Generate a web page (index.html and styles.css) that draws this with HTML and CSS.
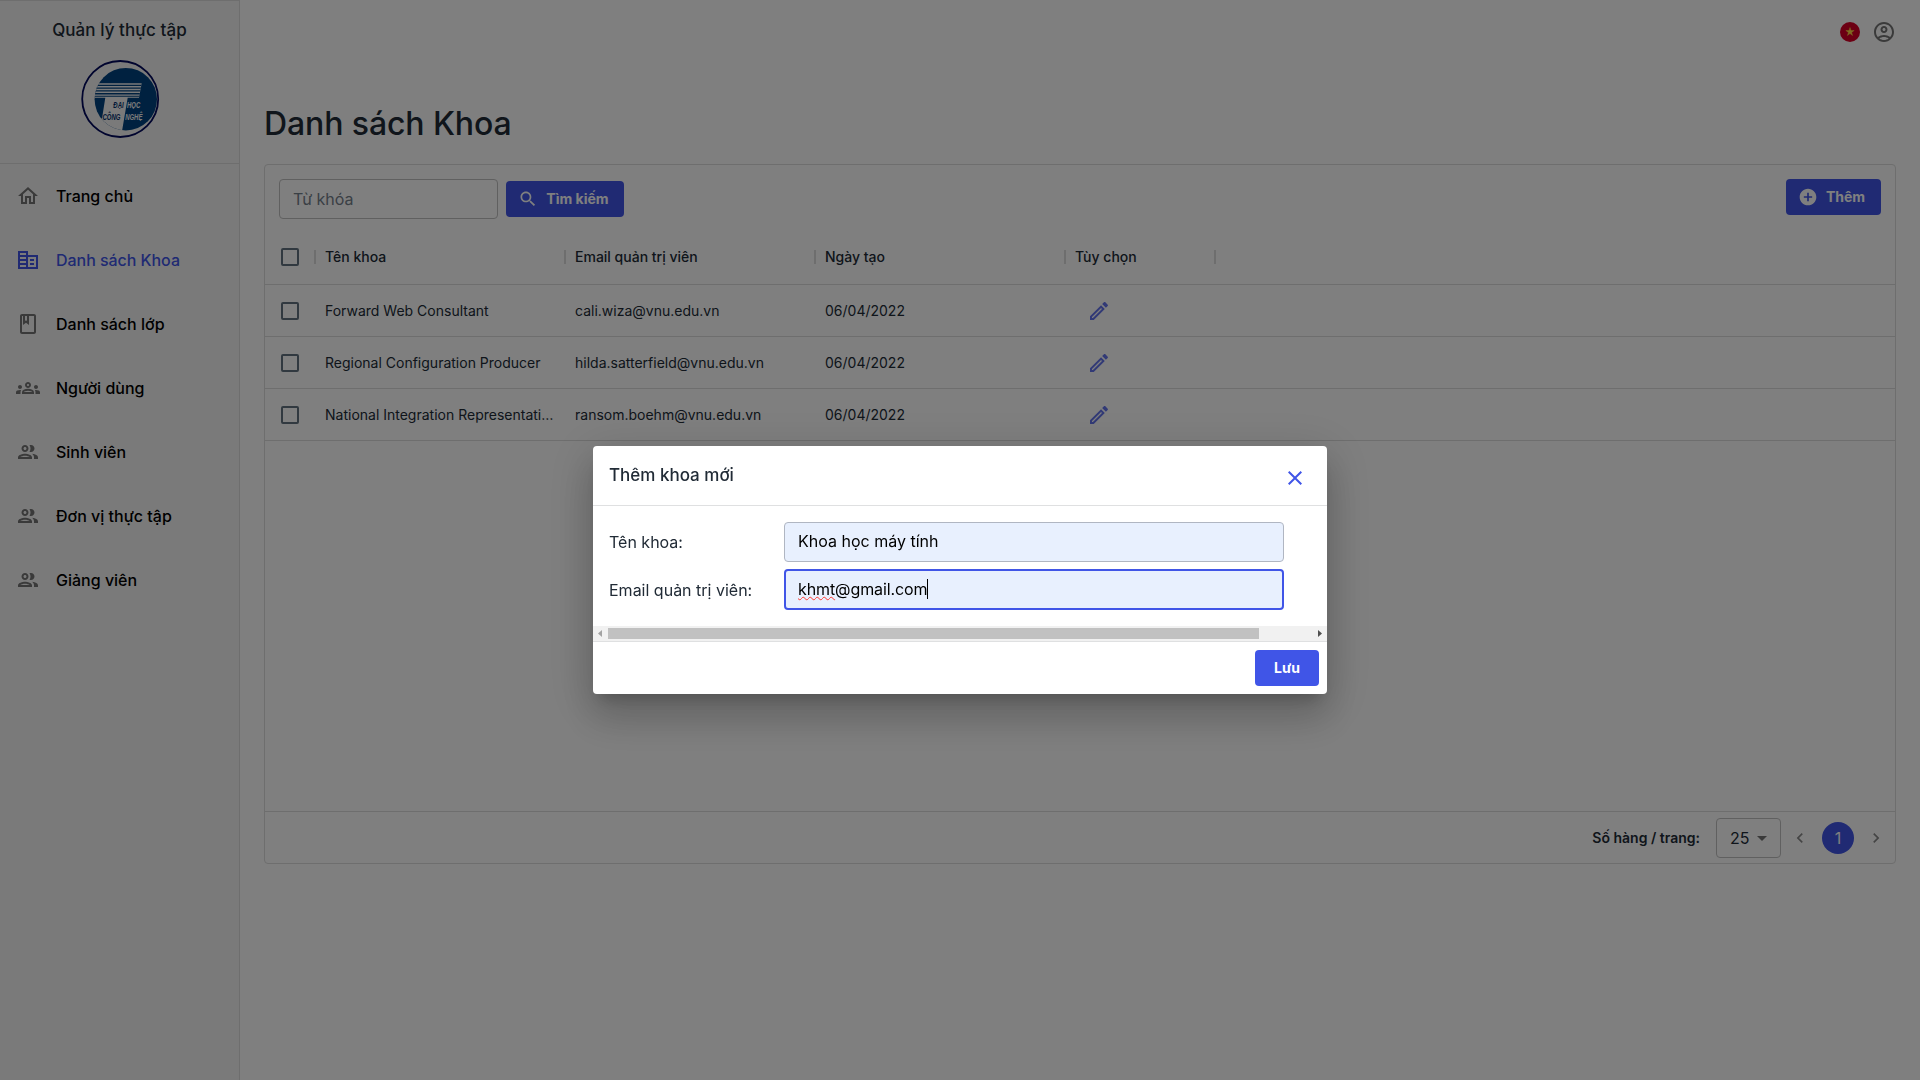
FILE: index.html
```html
<!DOCTYPE html>
<html lang="vi">
<head>
<meta charset="utf-8">
<title>Quản lý thực tập</title>
<link rel="stylesheet" href="styles.css">
</head>
<body>
<svg class="defs" aria-hidden="true">
  <symbol id="people" viewBox="0 0 24 24"><path d="M9 13.750c-2.340 0-7 1.170-7 3.500V19h14v-1.750c0-2.330-4.660-3.500-7-3.500zM4.340 17c.84-.58 2.870-1.250 4.660-1.250s3.820.67 4.660 1.250H4.340zM9 12c1.930 0 3.500-1.570 3.500-3.500S10.930 5 9 5 5.500 6.570 5.500 8.500 7.070 12 9 12zm0-5c.83 0 1.500.67 1.500 1.500S9.830 10 9 10s-1.500-.67-1.500-1.500S8.170 7 9 7zm7.040 6.810c1.160.84 1.960 1.960 1.960 3.440V19h4v-1.750c0-2.020-3.500-3.170-5.960-3.440zM15 12c1.930 0 3.500-1.570 3.500-3.500S16.930 5 15 5c-.54 0-1.040.13-1.500.35.63.89 1 1.980 1 3.150s-.37 2.260-1 3.150c.46.22.96.35 1.500.35z"/></symbol>
  <symbol id="pencil" viewBox="0 0 24 24"><path d="M3 17.250V21h3.750L17.810 9.940l-3.750-3.750L3 17.250zM5.920 19H5v-.920l9.060-9.060.92.92L5.920 19zM20.710 5.630l-2.340-2.340c-.2-.2-.45-.29-.71-.29s-.51.100-.7.290l-1.830 1.830 3.750 3.750 1.830-1.830c.390-.390.390-1.020 0-1.410z"/></symbol>
</svg>
<div class="app">
  <aside class="sidebar">
    <div class="brand">
      <div class="brand-name">Quản lý thực tập</div>
      <svg class="logo" viewBox="0 0 80 80">
        <clipPath id="disc"><circle cx="45.800" cy="40.200" r="31.200"/></clipPath>
        <circle cx="40.200" cy="40" r="38" fill="none" stroke="#00085c" stroke-width="1.800"/>
        <g clip-path="url(#disc)">
          <path fill="#004280" d="M10 5h70v70H10z"/>
          <path fill="#f5f5f5" d="M10 24.200H61.700L59 38.700H47.700L41.700 74H10V59.500H22L25.300 38.700H10z"/>
          <path fill="#004280" d="M10 25.700h51.500l-.3 1.300H10zM10 28.500h51l-.3 1.300H10zM10 31.300h50.400l-.3 1.300H10zM10 34.100h49.900l-.3 1.300H10zM10 36.700h49.400l-.2 1H10z"/>
        </g>
        <g class="logo-text" transform="scale(.68 1)">
          <text x="49" y="49.500" class="ink">ĐẠI</text><text x="69" y="49.500">HỌC</text>
          <text x="33" y="61" class="ink">CÔNG</text><text x="66.400" y="61">NGHỆ</text>
        </g>
      </svg>
    </div>
    <nav class="menu">
      <a class="item"><svg class="icon" viewBox="0 0 24 24"><path d="m12 5.690 5 4.500V18h-2v-6H9v6H7v-7.810l5-4.500M12 3 2 12h3v8h6v-6h2v6h6v-8h3L12 3z"/></svg>Trang chủ</a>
      <a class="item active"><svg class="icon" viewBox="0 0 24 24"><path d="M12 7V3H2v18h20V7H12zM10 19H4v-2h6v2zm0-4H4v-2h6v2zm0-4H4V9h6v2zm0-4H4V5h6v2zm10 12h-8V9h8v10zm-2-8h-4v2h4v-2zm0 4h-4v2h4v-2z"/></svg>Danh sách Khoa</a>
      <a class="item"><svg class="icon" viewBox="0 0 24 24"><path d="M18 2H6c-1.100 0-2 .9-2 2v16c0 1.100.9 2 2 2h12c1.100 0 2-.9 2-2V4c0-1.100-.9-2-2-2zM9 4h2v5l-1-.75L9 9V4zm9 16H6V4h1v9l3-2.250L13 13V4h5v16z"/></svg>Danh sách lớp</a>
      <a class="item"><svg class="icon" viewBox="0 0 24 24"><path d="M4 13c1.100 0 2-.9 2-2s-.9-2-2-2-2 .9-2 2 .9 2 2 2zm1.130 1.100c-.37-.06-.74-.1-1.130-.1-.99 0-1.930.21-2.780.58C.48 14.900 0 15.620 0 16.430V18h4.500v-1.610c0-.83.23-1.610.63-2.290zM20 13c1.100 0 2-.9 2-2s-.9-2-2-2-2 .9-2 2 .9 2 2 2zm4 3.430c0-.81-.48-1.530-1.220-1.850-.85-.37-1.790-.58-2.780-.58-.39 0-.76.04-1.130.1.4.68.63 1.460.63 2.290V18H24v-1.570zm-7.760-2.780c-1.170-.52-2.610-.9-4.240-.9s-3.070.39-4.240.9C6.680 14.130 6 15.210 6 16.390V18h12v-1.610c0-1.180-.68-2.260-1.760-2.740zM8.070 16c.09-.23.13-.39.91-.69.97-.38 1.990-.56 3.020-.56s2.050.18 3.020.56c.77.3.81.46.91.69H8.070zM12 8c.55 0 1 .45 1 1s-.45 1-1 1-1-.45-1-1 .45-1 1-1m0-2c-1.660 0-3 1.340-3 3s1.340 3 3 3 3-1.340 3-3-1.340-3-3-3z"/></svg>Người dùng</a>
      <a class="item"><svg class="icon"><use href="#people"/></svg>Sinh viên</a>
      <a class="item"><svg class="icon"><use href="#people"/></svg>Đơn vị thực tập</a>
      <a class="item"><svg class="icon"><use href="#people"/></svg>Giảng viên</a>
    </nav>
  </aside>
  <main class="main">
    <header class="topbar">
      <svg class="flag" viewBox="0 0 20 20"><circle cx="10" cy="10" r="10" fill="#d80027"/><path fill="#ffda44" d="M10 5.500l1 3h3.200l-2.600 1.900 1 3.100L10 11.600l-2.600 1.900 1-3.100-2.600-1.900H9z" stroke="#ffda44" stroke-width=".4"/></svg>
      <svg class="icon" viewBox="0 0 24 24"><path d="M12 2C6.480 2 2 6.480 2 12s4.480 10 10 10 10-4.480 10-10S17.520 2 12 2zM7.350 18.500C8.660 17.560 10.260 17 12 17s3.340.56 4.650 1.500C15.340 19.440 13.740 20 12 20s-3.340-.56-4.650-1.500zm10.790-1.380C16.450 15.800 14.320 15 12 15s-4.450.8-6.140 2.120C4.700 15.730 4 13.950 4 12c0-4.420 3.580-8 8-8s8 3.580 8 8c0 1.950-.7 3.730-1.860 5.120zM12 6c-1.930 0-3.500 1.570-3.500 3.500S10.070 13 12 13s3.500-1.570 3.500-3.500S13.930 6 12 6zm0 5c-.83 0-1.500-.67-1.500-1.500S11.170 8 12 8s1.500.67 1.500 1.500S12.830 11 12 11z"/></svg>
    </header>
    <h1>Danh sách Khoa</h1>
    <section class="card">
      <div class="toolbar">
        <div class="search">Từ khóa</div>
        <button class="btn find"><svg viewBox="0 0 24 24"><path d="M15.500 14h-.79l-.28-.27C15.410 12.590 16 11.110 16 9.500 16 5.910 13.090 3 9.500 3S3 5.910 3 9.500 5.910 16 9.500 16c1.610 0 3.090-.59 4.230-1.570l.27.280v.790l5 4.990L20.490 19l-4.990-5zm-6 0C7.010 14 5 11.990 5 9.500S7.010 5 9.500 5 14 7.010 14 9.500 11.990 14 9.500 14z"/></svg>Tìm kiếm</button>
        <button class="btn add"><svg viewBox="0 0 24 24"><path d="M12 2C6.480 2 2 6.480 2 12s4.480 10 10 10 10-4.480 10-10S17.520 2 12 2zm5 11h-4v4h-2v-4H7v-2h4V7h2v4h4v2z"/></svg>Thêm</button>
      </div>
      <div class="row head"><span class="check"><i></i></span><span>Tên khoa</span><span>Email quản trị viên</span><span>Ngày tạo</span><span>Tùy chọn</span><span></span></div>
      <div class="row"><span class="check"><i></i></span><span>Forward Web Consultant</span><span>cali.wiza@vnu.edu.vn</span><span>06/04/2022</span><span class="edit"><svg><use href="#pencil"/></svg></span></div>
      <div class="row"><span class="check"><i></i></span><span>Regional Configuration Producer</span><span>hilda.satterfield@vnu.edu.vn</span><span>06/04/2022</span><span class="edit"><svg><use href="#pencil"/></svg></span></div>
      <div class="row"><span class="check"><i></i></span><span>National Integration Representative</span><span>ransom.boehm@vnu.edu.vn</span><span>06/04/2022</span><span class="edit"><svg><use href="#pencil"/></svg></span></div>
      <footer class="pager">
        <span class="per-page">Số hàng / trang:</span>
        <div class="select">25<svg viewBox="0 0 24 24"><path d="m7 10 5 5 5-5z"/></svg></div>
        <svg class="chev" viewBox="0 0 24 24"><path d="M15.410 7.410 14 6l-6 6 6 6 1.410-1.410L10.830 12z"/></svg>
        <span class="page">1</span>
        <svg class="chev" viewBox="0 0 24 24"><path d="M10 6 8.590 7.410 13.170 12l-4.580 4.590L10 18l6-6z"/></svg>
      </footer>
    </section>
  </main>
</div>
<div class="backdrop">
  <div class="dialog">
    <div class="dialog-head"><h2>Thêm khoa mới</h2><svg viewBox="0 0 24 24"><path d="M19 6.410 17.590 5 12 10.590 6.410 5 5 6.410 10.590 12 5 17.590 6.410 19 12 13.410 17.590 19 19 17.590 13.410 12z"/></svg></div>
    <div class="form">
      <label>Tên khoa:</label><div class="field">Khoa học máy tính</div>
      <label>Email quản trị viên:</label><div class="field focus"><span class="misspelt">khmt</span>@gmail.com<i class="caret"></i></div>
    </div>
    <div class="scroll"><svg viewBox="0 0 15 15"><path fill="#a3a3a3" d="M9 4v7L5 7.500z"/></svg><div class="track"><div class="thumb"></div></div><svg viewBox="0 0 15 15"><path fill="#505050" d="M6 4v7l4-3.500z"/></svg></div>
    <div class="dialog-foot"><button class="btn save">Lưu</button></div>
  </div>
</div>
</body>
</html>
```
FILE: styles.css
```css
* { box-sizing: border-box; }
body { margin: 0; height: 1080px; overflow: hidden; background: #fff; color: #212b36; font: 400 16px/24px Inter, sans-serif; }
h1, h2 { margin: 0; font-weight: 500; }
svg { display: block; flex: none; }
.defs { display: block; width: 0; height: 0; position: absolute; }
.icon { width: 24px; height: 24px; fill: #757575; }

.app { display: flex; height: 1080px; }
.sidebar { width: 240px; background: #f5f5f5; border-top: 1px solid #dcdcdc; border-right: 1px solid #dcdcdc; }
.brand { height: 163px; padding-top: 16px; border-bottom: 1px solid #dcdcdc; display: flex; flex-direction: column; align-items: center; }
.brand-name { font-size: 17px; font-weight: 500; line-height: 26px; letter-spacing: .07px; }
.logo { width: 80px; height: 80px; margin-top: 16px; }
.logo-text { font: italic 700 8.8px "Liberation Sans", sans-serif; fill: #f5f5f5; }
.ink { fill: #00306c; }
.item { display: flex; align-items: center; height: 64px; padding-left: 16px; gap: 16px; color: #000; font-weight: 500; }
.item.active { color: #4055e7; letter-spacing: -.04px; }
.active .icon { fill: #4055e7; }

.main { flex: 1; padding: 0 24px; }
.topbar { height: 64px; display: flex; justify-content: flex-end; align-items: center; gap: 12px; }
.flag { width: 20px; height: 20px; }
h1 { margin: 34px 0 17px; height: 49px; font-size: 32px; line-height: 51px; letter-spacing: -.1px; }
.card { height: 700px; border: 1px solid #dcdcdc; border-radius: 4px; display: flex; flex-direction: column; }
.toolbar { display: flex; padding: 14px 14px 10px; gap: 8px; }
.search { width: 219px; height: 40px; padding: 0 13px; border: 1px solid #c0c0c0; border-radius: 4px; line-height: 38px; color: #75808b; }
.btn { height: 36px; border: 0; border-radius: 4px; background: #4055e7; color: #fff; font: 700 14px/36px Inter, sans-serif; display: flex; align-items: center; justify-content: center; padding: 0; }
.btn svg { width: 20px; height: 20px; fill: #fff; }
.find { width: 118px; margin-top: 2px; padding-right: 3px; gap: 8px; }
.add { width: 95px; margin-left: auto; padding-right: 4px; gap: 8px; }

.row { display: grid; grid-template-columns: 50px 250px 250px 250px 150px 1fr; height: 52px; border-bottom: 1px solid #dcdcdc; font-size: 14px; line-height: 51px; }
.row span { padding: 0 10px; white-space: nowrap; overflow: hidden; text-overflow: ellipsis; }
.row .check { display: flex; align-items: center; padding-left: 16px; }
.check i { width: 18px; height: 18px; border: 2px solid #637381; border-radius: 2px; }
.head { height: 56px; line-height: 56px; font-weight: 500; }
.head span + span { margin-left: -1px; padding-left: 11px; background: linear-gradient(#dcdcdc, #dcdcdc) 0 center / 2px 14px no-repeat; }
.row .edit { display: flex; align-items: center; padding-left: 22px; }
.edit svg { width: 24px; height: 24px; fill: #6474ec; }

.pager { margin-top: auto; height: 52px; border-top: 1px solid #dcdcdc; display: flex; align-items: center; justify-content: flex-end; }
.per-page { font-size: 14px; font-weight: 600; margin-right: 16px; }
.select { width: 65px; height: 40px; border: 1px solid #c0c0c0; border-radius: 4px; display: flex; align-items: center; padding: 0 6px 0 13px; line-height: 36px; justify-content: space-between; }
.select svg { width: 24px; height: 24px; fill: #757575; }
.chev { width: 20px; height: 20px; fill: #8a8a8a; margin: 0 9px; }
.page { width: 32px; height: 32px; margin: 0 3px; border-radius: 50%; background: #4055e7; color: #fff; text-align: center; line-height: 32px; }

.backdrop { position: fixed; inset: 0; background: rgba(0, 0, 0, .5); display: flex; align-items: flex-start; justify-content: center; padding-top: 446px; }
.dialog { width: 734px; height: 248px; background: #fff; border-radius: 4px; overflow: hidden; box-shadow: 0 11px 15px -7px rgba(0,0,0,.2), 0 24px 38px 3px rgba(0,0,0,.14), 0 9px 46px 8px rgba(0,0,0,.12); }
.dialog-head { height: 60px; padding: 0 20px 0 16px; display: flex; justify-content: space-between; border-bottom: 1px solid #dfe0e1; }
h2 { font-size: 17px; line-height: 59px; }
.dialog-head svg { width: 24px; height: 24px; margin-top: 20px; fill: #4055e7; }
.form { height: 120px; padding: 16px 43px 0 16px; display: grid; grid-template-columns: 175px 500px; grid-template-rows: 40px 40px; row-gap: 8px; align-items: center; }
.field { height: 40px; padding: 0 13px; border: 1px solid #b0b6c2; border-radius: 4px; background: #e8f0fe; color: #000; line-height: 37px; }
.field.focus { height: 41px; margin-top: -1px; padding: 0 12px; border: 2px solid #4055e7; display: flex; line-height: 36px; letter-spacing: -.1px; }
.misspelt { text-decoration: underline wavy #ff3b30 1px; text-decoration-skip-ink: none; }
.caret { width: 1px; height: 20px; margin-top: 8px; background: #000; }
.scroll { height: 15px; display: flex; background: #f1f1f1; }
.scroll svg { width: 15px; height: 15px; }
.track { flex: 1; }
.thumb { width: 651px; height: 11px; margin-top: 2px; background: #c1c1c1; }
.dialog-foot { height: 53px; border-top: 1px solid #dfe0e1; padding: 8px; display: flex; justify-content: flex-end; }
.save { width: 64px; }
```
